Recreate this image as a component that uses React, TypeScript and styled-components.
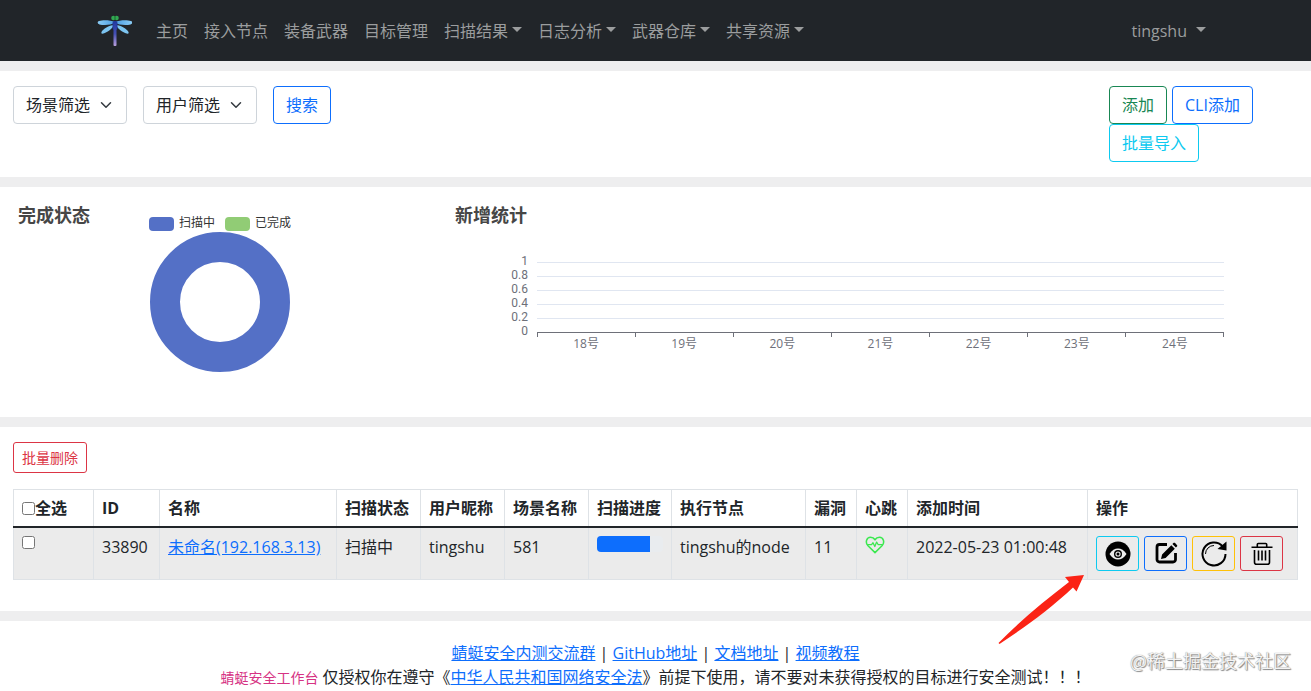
import React from "react";
import styled, { createGlobalStyle } from "styled-components";

const GlobalStyle = createGlobalStyle`
  *, *::before, *::after { box-sizing: border-box; }
  body {
    margin: 0;
    background: #fff;
    color: #212529;
    font-family: "Open Sans", "Noto Sans CJK SC", sans-serif;
    font-size: 16px;
    line-height: 24px;
  }
  button, select, input { font: inherit; margin: 0; }
  a { color: #0d6efd; }
`;

const Navbar = styled.header`
  display: flex;
  align-items: center;
  min-height: 61px;
  padding: 0 97px 0 96px;
  background: #212529;
`;

const Brand = styled.a`
  display: flex;
  margin-right: 16px;
`;

const NavList = styled.nav`
  display: flex;
  flex: 1;
`;

const navItem = `
  display: flex;
  align-items: center;
  padding: 8px;
  border: 0;
  background: none;
  color: #9b9d9e;
  text-decoration: none;
  white-space: nowrap;
  cursor: pointer;
`;

const NavLink = styled.a`${navItem}`;
const NavMenu = styled.button<{ $wide?: boolean }>`
  ${navItem}
  &::after {
    content: "";
    margin-left: ${(p) => (p.$wide ? 9 : 4)}px;
    margin-bottom: 3px;
    border: 5px solid transparent;
    border-top-color: currentColor;
    border-bottom: 0;
  }
`;

const Divider = styled.hr`
  height: 10px;
  margin: 0;
  border: 0;
  background: #eeeeef;
`;

const FilterSection = styled.section`
  display: flex;
  justify-content: space-between;
  padding: 15px 13px;
`;

const FilterGroup = styled.form`
  display: flex;
  align-items: flex-start;
  gap: 16px;
`;

const AddGroup = styled.div`
  display: flex;
  flex-wrap: wrap;
  column-gap: 5px;
  width: 189px;
`;

const Button = styled.button<{ $color: string; $small?: boolean }>`
  padding: ${(p) => (p.$small ? "4px 8px" : "6px 12px")};
  border: 1px solid ${(p) => p.$color};
  border-radius: ${(p) => (p.$small ? 3 : 4)}px;
  background: #fff;
  color: ${(p) => p.$color};
  font-size: ${(p) => (p.$small ? 14 : 16)}px;
  line-height: ${(p) => (p.$small ? 21 : 24)}px;
  cursor: pointer;
`;

const SelectBox = styled.label`
  position: relative;
  display: block;
  svg {
    position: absolute;
    top: 13px;
    right: 15px;
    pointer-events: none;
  }
`;

const Select = styled.select`
  appearance: none;
  width: 114px;
  height: 38px;
  padding: 6px 12px;
  border: 1px solid #ced4da;
  border-radius: 4px;
  background: #fff;
  color: #212529;
`;

const ChartSection = styled.section`
  display: grid;
  grid-template-columns: 1fr 2fr;
  min-height: 230px;
`;

const ChartPanel = styled.figure`
  margin: 0;
  padding: 16px 0 0 18px;
`;

const DonutPanel = styled(ChartPanel)`
  display: flex;
`;

const ChartTitle = styled.h2`
  margin: 0;
  color: #464646;
  font-size: 18px;
  line-height: 24px;
`;

const DonutChart = styled.div`
  display: flex;
  flex-direction: column;
  align-items: center;
  margin: 10px 0 0 59px;
  svg { display: block; }
`;

const Legend = styled.ul`
  display: flex;
  gap: 10px;
  margin: 0;
  padding: 0;
  list-style: none;
  color: #333;
  font-size: 12px;
  line-height: 19px;
`;

const LegendItem = styled.li<{ $color: string }>`
  display: flex;
  align-items: flex-start;
  gap: 5px;
  &::before {
    content: "";
    width: 25px;
    height: 14px;
    margin-top: 4px;
    border-radius: 4px;
    background: ${(p) => p.$color};
  }
`;

const LineChart = styled.div`
  display: grid;
  grid-template-columns: 73px 1fr;
  column-gap: 9px;
  margin: 27px 87px 0 0;
  color: #6e7079;
  font-size: 12px;
  line-height: 14px;
`;

const YAxis = styled.div`
  font-family: Roboto, sans-serif;
  text-align: right;
`;

const Plot = styled.div`
  padding-top: 8px;
`;

const GridLine = styled.div`
  height: 14px;
  border-top: 1px solid #e0e6f1;
`;

const TickRow = styled.div`
  display: flex;
  height: 5px;
  border-top: 1px solid #6e7079;
`;

const Tick = styled.span`
  flex: 1;
  border-left: 1px solid #6e7079;
  &:last-child { border-right: 1px solid #6e7079; }
`;

const XLabels = styled.div`
  display: flex;
  text-align: center;
`;

const XLabel = styled.div`
  flex: 1;
`;

const ListSection = styled.section`
  padding: 15px 13px 31px;
`;

const Table = styled.table`
  width: 100%;
  margin-top: 16px;
  border-collapse: collapse;
  table-layout: fixed;
  text-align: left;
`;

const HeadCell = styled.th`
  padding: 6px 8px;
  border: 1px solid #dee2e6;
  border-bottom: 2px solid #212529;
  white-space: nowrap;
`;

const Cell = styled.td`
  padding: 7px 8px 8px;
  border: 1px solid #dee2e6;
  background: #ebebeb;
  vertical-align: top;
  white-space: nowrap;
`;

const CheckLabel = styled.label`
  display: flex;
  align-items: center;
`;

const Checkbox = styled.input`
  display: block;
  width: 13px;
  height: 13px;
`;

/* Boxed content of a body cell sits just under the text's top edge */
const CellContent = styled.div`
  padding-top: 1px;
  svg { display: block; }
`;

const Progress = styled.div`
  height: 16px;
  overflow: hidden;
  border-radius: 4px;
  background: #e9ecef;
`;

const ProgressFill = styled.div`
  height: 100%;
  background: #0d6efd;
`;

const Actions = styled.div`
  position: relative;
  display: flex;
  gap: 5px;
`;

const IconButton = styled.button<{ $color: string }>`
  display: flex;
  align-items: center;
  justify-content: center;
  width: 43px;
  height: 35px;
  padding: 0;
  border: 1px solid ${(p) => p.$color};
  border-radius: 3px;
  background: none;
  color: #000;
  cursor: pointer;
`;

const Arrow = styled.svg`
  position: absolute;
  top: 38px;
  left: -98px;
  pointer-events: none;
`;

const Footer = styled.footer`
  position: relative;
  padding-top: 20px;
  text-align: center;
`;

const FooterLine = styled.p`
  margin: 0;
  code {
    color: #d63384;
    font-family: inherit;
    font-size: 14px;
  }
`;

const Watermark = styled.span`
  position: absolute;
  top: 27px;
  right: 20px;
  color: #f4f4f4;
  font-family: "Noto Sans CJK SC", sans-serif;
  font-size: 18px;
  text-shadow: 0 0 1px #777, 1px 1px 1px #888;
`;

const Dragonfly = () => (
  <svg width="36" height="34" viewBox="0 0 36 34" aria-label="蜻蜓">
    <defs>
      <linearGradient id="body" x1="0" y1="0" x2="0" y2="1">
        <stop offset="0" stopColor="#2339a0" />
        <stop offset=".5" stopColor="#4550b4" />
        <stop offset="1" stopColor="#b9a0dc" />
      </linearGradient>
      <linearGradient id="wing" x1="0" y1="0" x2="1" y2="0">
        <stop offset="0" stopColor="#8accf5" />
        <stop offset=".5" stopColor="#4a9be0" />
        <stop offset="1" stopColor="#8accf5" />
      </linearGradient>
    </defs>
    <path d="M19 8C14 6 7 6 3 7c-2 .6-1.600 3 .5 3.400C8 11.500 15 11 19 9c4 2 11 2.500 15.500 1.400C36.600 10 37 7.600 35 7c-4-1-11-1-16 1z" fill="url(#wing)" />
    <path d="M18 11C13 11 7 15 5.500 18c-.6 1.600.6 2 2 1.600C11 18.500 16 15 18 11zm2 0c5 0 11 4 12.500 7 .6 1.600-.6 2-2 1.600C27 18.500 22 15 20 11z" fill="#7cc4f0" />
    <rect x="16.500" y="7" width="5" height="9" rx="2" fill="#2339a0" />
    <rect x="17.500" y="8" width="3" height="24" rx="1" fill="url(#body)" />
    <circle cx="17.500" cy="4" r="2.300" fill="#32a852" />
    <circle cx="20.500" cy="4" r="2.300" fill="#32a852" />
    <path d="M19 2v4" stroke="#17632c" />
  </svg>
);

const Chevron = () => (
  <svg width="12" height="12" viewBox="0 0 16 16" fill="none" stroke="#343a40" strokeWidth="2" strokeLinecap="round" strokeLinejoin="round">
    <path d="M2 5l6 6 6-6" />
  </svg>
);

const Heartbeat = () => (
  <svg width="20" height="18" viewBox="0 0 22 20" fill="none" stroke="#3be84f" strokeWidth="1.700" strokeLinejoin="round" aria-label="在线">
    <path d="M11 18.500L3.200 10.800C-.2 7.200 1.600 1.500 6 1.500c2.200 0 3.900 1 5 2.700 1.100-1.700 2.800-2.700 5-2.700 4.400 0 6.200 5.700 2.800 9.300z" />
    <path d="M2.500 9.500h4.700l1.600-2 2 4.200 2-5 1.600 2.800h5.100" strokeWidth="1.400" />
  </svg>
);

const EyeIcon = () => (
  <svg width="26" height="26" viewBox="0 0 26 26">
    <circle cx="13" cy="13" r="12.500" />
    <path d="M4.500 13C7 9.300 9.800 7.500 13 7.500s6 1.800 8.500 5.500c-2.500 3.700-5.300 5.500-8.500 5.500S7 16.700 4.500 13z" fill="#ececec" />
    <circle cx="13" cy="13" r="4" />
    <circle cx="13" cy="13" r="2.600" fill="#ececec" />
    <circle cx="13" cy="13" r="1.500" />
  </svg>
);

const EditIcon = () => (
  <svg width="26" height="26" viewBox="0 0 26 26">
    <path d="M14 3.500H6.500A2.500 2.500 0 0 0 4 6v12.500A2.500 2.500 0 0 0 6.500 21H20a2.500 2.500 0 0 0 2.500-2.500V12" fill="none" stroke="#000" strokeWidth="2.800" />
    <path d="M18.300 4.200l3.500 3.500L12.600 16.900 8 18l1.100-4.600zM19.400 3.100l1-1c.5-.5 1.200-.5 1.700 0l1.800 1.800c.5.5.5 1.200 0 1.700l-1 1z" />
  </svg>
);

const ReloadIcon = () => (
  <svg width="26" height="26" viewBox="0 0 26 26" fill="none" stroke="#000">
    <path d="M21.500 5.200A11.500 11.500 0 1 0 24.500 13" strokeWidth="2" />
    <path d="M4.500 13A8.500 8.500 0 0 1 13 4.500" strokeWidth="1" />
    <path d="M25.500.5v9l-9-1.500z" fill="#000" stroke="none" />
  </svg>
);

const TrashIcon = () => (
  <svg width="26" height="26" viewBox="0 0 26 26" fill="none" stroke="#000" strokeWidth="1.600">
    <path d="M2.500 6.300h21M8.300 6V3.500q0-1 1-1h7.400q1 0 1 1V6M5.500 9v12.300q0 2 2 2h11q2 0 2-2V9" />
    <path d="M9.500 9.500v10M13 9.500v10M16.500 9.500v10" />
  </svg>
);

const columns: [string, number][] = [
  ["全选", 80],
  ["ID", 66],
  ["名称", 177],
  ["扫描状态", 84],
  ["用户昵称", 84],
  ["场景名称", 84],
  ["扫描进度", 83],
  ["执行节点", 134],
  ["漏洞", 51],
  ["心跳", 51],
  ["添加时间", 180],
  ["操作", 210],
];

const links = ["蜻蜓安全内测交流群", "GitHub地址", "文档地址", "视频教程"];
const days = [18, 19, 20, 21, 22, 23, 24];
const levels = ["1", "0.8", "0.6", "0.4", "0.2", "0"];
const progress = 80;

export default function App() {
  return (
    <>
      <GlobalStyle />
      <Navbar>
        <Brand href="#"><Dragonfly /></Brand>
        <NavList>
          {["主页", "接入节点", "装备武器", "目标管理"].map((t) => (
            <NavLink href="#" key={t}>{t}</NavLink>
          ))}
          {["扫描结果", "日志分析", "武器仓库", "共享资源"].map((t) => (
            <NavMenu type="button" key={t}>{t}</NavMenu>
          ))}
        </NavList>
        <NavMenu type="button" $wide>tingshu</NavMenu>
      </Navbar>
      <Divider />
      <main>
        <FilterSection>
          <FilterGroup>
            <SelectBox>
              <Select aria-label="场景筛选"><option>场景筛选</option></Select>
              <Chevron />
            </SelectBox>
            <SelectBox>
              <Select aria-label="用户筛选"><option>用户筛选</option></Select>
              <Chevron />
            </SelectBox>
            <Button type="button" $color="#0d6efd">搜索</Button>
          </FilterGroup>
          <AddGroup>
            <Button type="button" $color="#198754">添加</Button>
            <Button type="button" $color="#0d6efd">CLI添加</Button>
            <Button type="button" $color="#0dcaf0">批量导入</Button>
          </AddGroup>
        </FilterSection>
        <Divider />
        <ChartSection>
          <DonutPanel>
            <ChartTitle>完成状态</ChartTitle>
            <DonutChart>
              <Legend>
                <LegendItem $color="#5470c6">扫描中</LegendItem>
                <LegendItem $color="#91cc75">已完成</LegendItem>
              </Legend>
              <svg width="140" height="140" viewBox="0 0 140 140">
                <circle cx="70" cy="70" r="55" fill="none" stroke="#5470c6" strokeWidth="30" />
              </svg>
            </DonutChart>
          </DonutPanel>
          <ChartPanel>
            <ChartTitle>新增统计</ChartTitle>
            <LineChart>
              <YAxis>
                {levels.map((l) => <div key={l}>{l}</div>)}
              </YAxis>
              <Plot>
                {levels.slice(1).map((l) => <GridLine key={l} />)}
                <TickRow>{days.map((d) => <Tick key={d} />)}</TickRow>
                <XLabels>
                  {days.map((d) => <XLabel key={d}>{d}号</XLabel>)}
                </XLabels>
              </Plot>
            </LineChart>
          </ChartPanel>
        </ChartSection>
        <Divider />
        <ListSection>
          <Button type="button" $color="#dc3545" $small>批量删除</Button>
          <Table>
            <colgroup>
              {columns.map(([name, width]) => <col key={name} width={width} />)}
            </colgroup>
            <thead>
              <tr>
                {columns.map(([name], i) => (
                  <HeadCell key={name} scope="col">
                    {i === 0 ? <CheckLabel><Checkbox type="checkbox" />{name}</CheckLabel> : name}
                  </HeadCell>
                ))}
              </tr>
            </thead>
            <tbody>
              <tr>
                <Cell>
                  <CellContent><Checkbox type="checkbox" aria-label="33890" /></CellContent>
                </Cell>
                <Cell>33890</Cell>
                <Cell><a href="#">未命名(192.168.3.13)</a></Cell>
                <Cell>扫描中</Cell>
                <Cell>tingshu</Cell>
                <Cell>581</Cell>
                <Cell>
                  <CellContent>
                    <Progress role="progressbar" aria-valuenow={progress}>
                      <ProgressFill style={{ width: `${progress}%` }} />
                    </Progress>
                  </CellContent>
                </Cell>
                <Cell>tingshu的node</Cell>
                <Cell>11</Cell>
                <Cell><CellContent><Heartbeat /></CellContent></Cell>
                <Cell>2022-05-23 01:00:48</Cell>
                <Cell>
                  <CellContent>
                    <Actions>
                      <IconButton type="button" aria-label="查看" $color="#0dcaf0"><EyeIcon /></IconButton>
                      <IconButton type="button" aria-label="编辑" $color="#0d6efd"><EditIcon /></IconButton>
                      <IconButton type="button" aria-label="重新扫描" $color="#ffc107"><ReloadIcon /></IconButton>
                      <IconButton type="button" aria-label="删除" $color="#dc3545"><TrashIcon /></IconButton>
                      <Arrow width="88" height="72" viewBox="0 0 88 72">
                        <path d="M86 1L67 3l4 5C45 28 22 47 .5 69l1 1C27 53 51 36 75 13.500l3.500 4z" fill="#fb2315" />
                      </Arrow>
                    </Actions>
                  </CellContent>
                </Cell>
              </tr>
            </tbody>
          </Table>
        </ListSection>
      </main>
      <Divider />
      <Footer>
        <FooterLine>
          {links.map((t, i) => (
            <React.Fragment key={t}>
              {i > 0 && " | "}
              <a href="#">{t}</a>
            </React.Fragment>
          ))}
        </FooterLine>
        <FooterLine>
          <code>蜻蜓安全工作台</code> 仅授权你在遵守《<a href="#">中华人民共和国网络安全法</a>》前提下使用，请不要对未获得授权的目标进行安全测试！！！
        </FooterLine>
        <Watermark>@稀土掘金技术社区</Watermark>
      </Footer>
    </>
  );
}
